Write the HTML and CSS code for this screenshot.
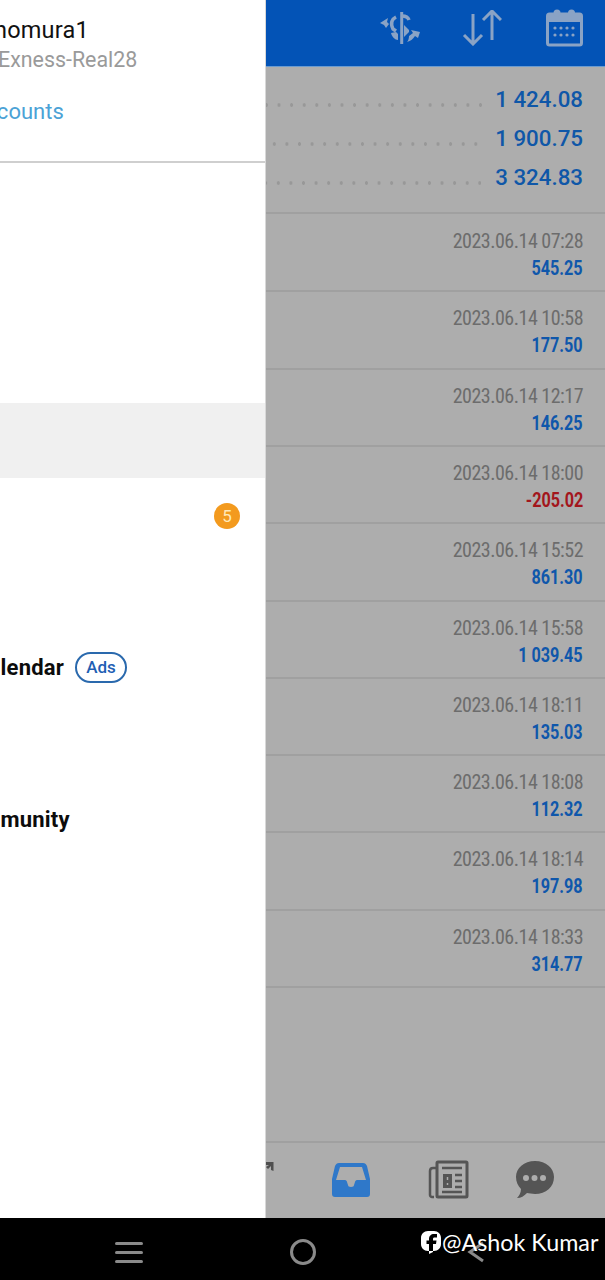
FILE: index.html
```html
<!DOCTYPE html>
<html lang="en">
<head>
<meta charset="utf-8">
<title>History</title>
<link rel="stylesheet" href="styles.css">
</head>
<body>
<div class="screen">
  <div class="content">
    <aside class="drawer">
      <header class="account">
        <div class="acc-name">homura1</div>
        <div class="acc-server">Exness-Real28</div>
        <div class="acc-link">Accounts</div>
      </header>
      <ul class="menu">
        <li class="item"></li>
        <li class="item"></li>
        <li class="item"></li>
        <li class="item active"></li>
        <li class="item"><span class="badge">5</span></li>
        <li class="item short"></li>
        <li class="item"><span class="label label-cal">Calendar</span><span class="pill">Ads</span></li>
        <li class="item"></li>
        <li class="item"><span class="label label-com">Community</span></li>
      </ul>
    </aside>
    <main class="main">
      <header class="bar">
        <svg class="ico-dollar" width="44" height="36" viewBox="0 0 44 36">
          <path d="M21.700 2v32" fill="none" stroke="#8aa3c5" stroke-width="3"/>
          <path d="M29 10c-1-3-4-4-7-4" fill="none" stroke="#8aa3c5" stroke-width="3.500"/>
          <path d="M16 7c-4 2-6 6-3 12l3 2" fill="none" stroke="#8aa3c5" stroke-width="3.500"/>
          <path d="M0 13l8-5-1 4 2 2-3 4-2-3z" fill="#8aa3c5"/>
          <path d="M11 23l5-1 2 2v6c-3 0-6-3-7-7z" fill="#8aa3c5"/>
          <path d="M24 15l5 5v2l-5 5z" fill="#8aa3c5"/>
          <path d="M40 22l-9-2 2 3-4 3c0 3-1 5-2 6 4-1 6-3 8-6l3 2z" fill="#8aa3c5"/>
        </svg>
        <svg class="ico-arrows" width="40" height="36" viewBox="0 0 40 36">
          <path d="M11 4v30M2 25l9 9 9-9M30 1v29M21 10l9-9 9 9" fill="none" stroke="#8aa3c5" stroke-width="3"/>
        </svg>
        <svg class="ico-cal" width="37" height="38" viewBox="0 0 37 38">
          <rect x="1.500" y="5" width="34" height="31" rx="2" fill="none" stroke="#8aa3c5" stroke-width="3"/>
          <rect x="1.500" y="5" width="34" height="8" fill="#8aa3c5"/>
          <circle cx="11" cy="4" r="3.500" fill="#8aa3c5"/>
          <circle cx="25.500" cy="4" r="3.500" fill="#8aa3c5"/>
          <g fill="#8aa3c5">
            <circle cx="9" cy="19" r="1.600"/><circle cx="15" cy="19" r="1.600"/><circle cx="21" cy="19" r="1.600"/><circle cx="27" cy="19" r="1.600"/>
            <circle cx="9" cy="26" r="1.600"/><circle cx="15" cy="26" r="1.600"/><circle cx="21" cy="26" r="1.600"/><circle cx="27" cy="26" r="1.600"/>
          </g>
        </svg>
      </header>
      <section class="summary">
        <div class="sum-row"><span class="dots"></span><span class="sum-val">1 424.08</span></div>
        <div class="sum-row sum-short"><span class="dots"></span><span class="sum-val">1 900.75</span></div>
        <div class="sum-row sum-third"><span class="dots"></span><span class="sum-val">3 324.83</span></div>
      </section>
      <ul class="deals">
        <li class="deal"><span class="date">2023.06.14 07:28</span><span class="amt">545.25</span></li>
        <li class="deal"><span class="date">2023.06.14 10:58</span><span class="amt">177.50</span></li>
        <li class="deal"><span class="date">2023.06.14 12:17</span><span class="amt">146.25</span></li>
        <li class="deal"><span class="date">2023.06.14 18:00</span><span class="amt neg">-205.02</span></li>
        <li class="deal"><span class="date">2023.06.14 15:52</span><span class="amt">861.30</span></li>
        <li class="deal"><span class="date">2023.06.14 15:58</span><span class="amt">1 039.45</span></li>
        <li class="deal"><span class="date">2023.06.14 18:11</span><span class="amt">135.03</span></li>
        <li class="deal"><span class="date">2023.06.14 18:08</span><span class="amt">112.32</span></li>
        <li class="deal"><span class="date">2023.06.14 18:14</span><span class="amt">197.98</span></li>
        <li class="deal"><span class="date">2023.06.14 18:33</span><span class="amt">314.77</span></li>
      </ul>
      <nav class="tabs">
        <svg class="ico-partial" width="8" height="11" viewBox="0 0 8 11"><path d="M0 1h7.500v9L5 9V5L2 8 0 6l3-2H0z" fill="#4f4f4f"/></svg>
        <svg class="ico-inbox" width="40" height="36" viewBox="0 0 40 36">
          <path fill-rule="evenodd" d="M8 1h24c2 0 3 1 4 3l3 13v15c0 2-1 3-3 3H4c-2 0-3-1-3-3V17L4 4c1-2 2-3 4-3zm1 4L5 18h9c1 0 2 1 2 2l1 3c0 1 1 2 3 2s3-1 3-2l1-3c0-1 1-2 2-2h9L31 5z" fill="#2f78c9"/>
        </svg>
        <svg class="ico-news" width="41" height="39" viewBox="0 0 41 39">
          <path d="M9 8H5C3 8 2 9 2 11v24c0 1 1 2 2 2h2" fill="none" stroke="#555" stroke-width="2.500"/>
          <rect x="9" y="2" width="30" height="35" rx="1" fill="none" stroke="#555" stroke-width="3"/>
          <path d="M14 8h20" stroke="#555" stroke-width="2.500"/>
          <rect x="15" y="14" width="9" height="14" fill="#555"/>
          <path d="M27 15h7M27 21h7M27 27h7M14 32h20" stroke="#555" stroke-width="2.500"/>
          <path d="M19.500 17v3M19.500 23v2" stroke="#adadad" stroke-width="1.500"/>
        </svg>
        <svg class="ico-chat" width="40" height="39" viewBox="0 0 40 39">
          <path d="M20 1c11 0 19 7 19 16 0 10-8 17-19 17-3 0-6-1-8-1-3 3-6 5-10 5 2-2 4-5 4-9C3 26 1 22 1 17 1 8 9 1 20 1z" fill="#555"/>
          <circle cx="11" cy="18" r="3" fill="#adadad"/><circle cx="19.500" cy="18" r="3" fill="#adadad"/><circle cx="28" cy="18" r="3" fill="#adadad"/>
        </svg>
      </nav>
    </main>
  </div>
  <footer class="sysnav">
    <span class="burger"><i></i><i></i><i></i></span>
    <span class="home"></span>
    <svg class="back" width="18" height="24" viewBox="0 0 18 24"><path d="M16 3L3 12l13 9" fill="none" stroke="#8a8a8a" stroke-width="3"/></svg>
  </footer>
  <div class="watermark">
    <svg width="22" height="25" viewBox="0 0 22 25"><path fill-rule="evenodd" d="M8 1h6c4 0 7 3 7 7v6c0 4-3 7-7 7h-1v1l-4 2v-3H8c-4 0-7-3-7-7V8c0-4 3-7 7-7zm1 20h4v-7h3l.5-3.500H13V9c0-1 .5-1.500 1.500-1.500H17V4h-3c-3 0-5 2-5 5v1.500H6.500V14H9z" fill="#fff"/></svg>
    <span>@Ashok Kumar</span>
  </div>
</div>
</body>
</html>
```

FILE: styles.css
```css
* { box-sizing: border-box; }
html, body { margin: 0; padding: 0; }
body { font-family: Roboto, "Liberation Sans", sans-serif; background: #000; }
ul { list-style: none; margin: 0; padding: 0; }

.screen { position: relative; width: 605px; height: 1280px; display: flex; flex-direction: column; overflow: hidden; }
.content { height: 1218px; display: flex; }

.drawer { width: 266px; flex: none; background: #fff; overflow: hidden; border-right: 1px solid #d8d8d8; }
.account { height: 163px; padding-top: 15px; border-bottom: 2px solid #cfcfcf; white-space: nowrap; }
.acc-name { font-size: 23.500px; line-height: 30px; color: #111; margin-left: -6px; letter-spacing: .2px; }
.acc-server { font-size: 21.400px; line-height: 30px; color: #9a9a9a; margin-left: -2px; }
.acc-link { font-size: 22px; line-height: 30px; color: #4ba2d6; margin-top: 22px; margin-left: -29px; }

.menu { padding-top: 11px; }
.item { height: 76px; display: flex; align-items: center; position: relative; white-space: nowrap; }
.active { background: #f0f0f0; height: 75px; margin-top: 1px; }
.short { height: 75px; }
.badge { width: 26px; height: 26px; border-radius: 50%; background: #f39a1e; color: #ffe9b8; font-size: 17px; display: flex; align-items: center; justify-content: center; margin-left: 214px; }
.label { font-size: 22px; letter-spacing: .2px; font-weight: 700; color: #0c0c0c; }
.label-cal { margin-left: -26px; }
.label-com { margin-left: -46px; }
.pill { margin-left: 11px; width: 52px; height: 31px; border: 2px solid #2a69ad; border-radius: 16px; color: #1f5fb4; font-size: 17px; font-weight: 500; display: flex; align-items: center; justify-content: center; }

.main { flex: 1; min-width: 0; background: #adadad; display: flex; flex-direction: column; }
.bar { height: 67px; flex: none; background: #0353b6; border-bottom: 1px solid #6a9bd0; position: relative; display: flex; align-items: center; justify-content: flex-end; padding: 0 22px 11px 0; gap: 44px; }
.ico-dollar { margin-right: -6px; }

.summary { height: 147px; padding-top: 12px; border-bottom: 2px solid #a0a0a0; flex: none; }
.sum-row { height: 39px; display: flex; align-items: center; gap: 12px; padding-right: 22px; }
.dots { flex: 1; height: 4px; margin-top: 13px; background-image: radial-gradient(circle, #989898 1.500px, transparent 2px); background-size: 12.600px 4px; background-position: -5.900px 0; background-repeat: repeat-x; }
.sum-short .dots { margin-right: 5px; background-position: 2px 0; }
.sum-third .dots { margin-right: 2px; background-position: -6.600px 0; }
.sum-val { font-size: 22.300px; font-weight: 500; color: #0f57a8; }

.deals { flex: 1; min-height: 0; }
.deal { height: 77.300px; border-bottom: 2px solid #a0a0a0; padding: 13px 22px 0 0; display: flex; flex-direction: column; align-items: flex-end; }
.deal:first-child { height: 78.400px; padding-top: 14px; }
.date { font-size: 20px; line-height: 27px; color: #6c6c6c; font-stretch: 75%; letter-spacing: -.5px; white-space: nowrap; }
.amt { font-size: 19.500px; line-height: 27px; font-weight: 700; color: #0f57ab; transform: scaleX(.83); transform-origin: right center; white-space: nowrap; }
.neg { color: #a3161c; }

.tabs { height: 77px; flex: none; border-top: 2px solid #a0a0a0; position: relative; display: flex; align-items: center; padding: 0 0 2px 65px; }
.ico-partial { position: absolute; left: 0; top: 18px; }
.ico-inbox { margin-right: 57px; }
.ico-news { margin-right: 46px; }

.sysnav { height: 62px; flex: none; background: #000; position: relative; display: flex; align-items: center; padding-left: 115px; padding-top: 6px; }
.burger { width: 28px; display: flex; flex-direction: column; gap: 6px; }
.burger i { display: block; height: 3px; border-radius: 2px; background: #8a8a8a; }
.home { width: 26px; height: 26px; border: 3px solid #8a8a8a; border-radius: 50%; margin-left: 147px; }
.back { margin-left: 151px; }

.watermark { position: absolute; left: 420px; top: 1229px; display: flex; align-items: center; gap: 0; color: #fff; font-family: Lato, sans-serif; font-size: 23.300px; line-height: 26px; white-space: nowrap; }
```
